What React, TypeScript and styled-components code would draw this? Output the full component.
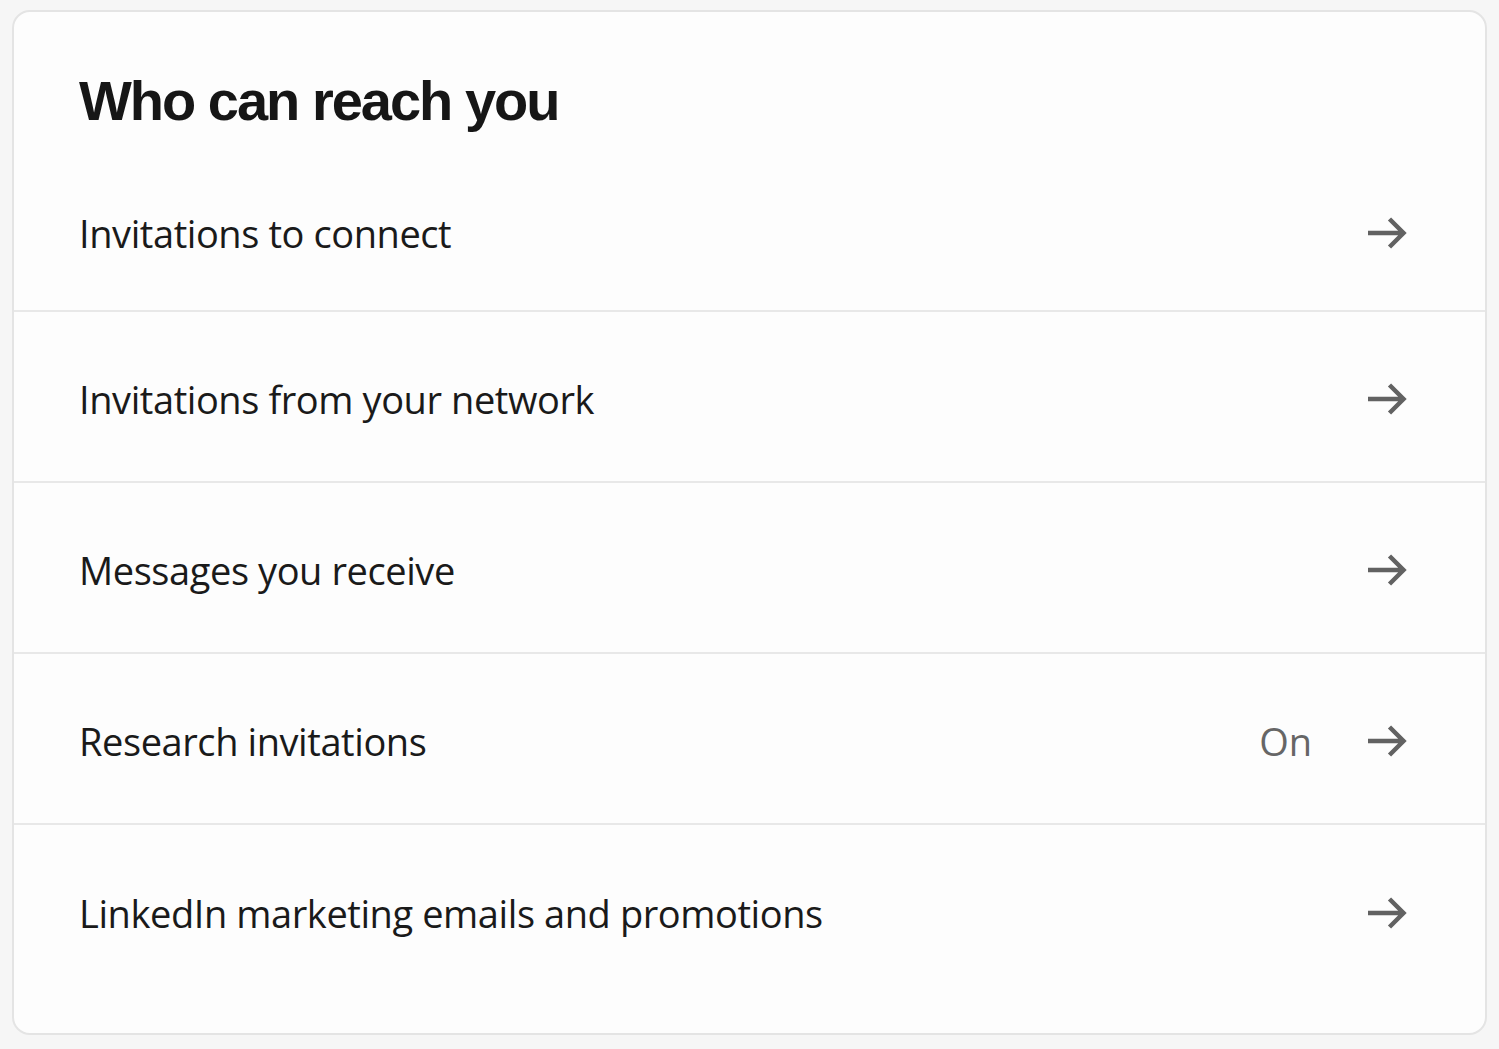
import React from "react";
import styled, { createGlobalStyle } from "styled-components";

const GlobalStyle = createGlobalStyle`
  html, body {
    margin: 0;
    padding: 0;
    background: #f6f6f6;
  }
  body {
    font-family: "Open Sans", "Noto Sans", sans-serif;
  }
`;

const Page = styled.div`
  width: 1499px;
  height: 1049px;
  padding: 10px 12px 0 12px;
  box-sizing: border-box;
`;

const Card = styled.div`
  width: 1475px;
  height: 1025px;
  box-sizing: border-box;
  background: #fdfdfd;
  border: 2px solid #e4e4e4;
  border-radius: 18px;
  display: flex;
  flex-direction: column;
`;

const Header = styled.div`
  height: 140px;
  padding: 57px 0 0 65px;
  box-sizing: border-box;
`;

const Title = styled.h1`
  margin: 0;
  font-family: "Liberation Sans", Arial, sans-serif;
  font-weight: 700;
  font-size: 56px;
  line-height: 64px;
  letter-spacing: -2px;
  color: #161616;
`;

const Row = styled.div<{ $first?: boolean; $last?: boolean }>`
  height: ${(p) => (p.$first ? "160px" : "171px")};
  box-sizing: border-box;
  display: flex;
  align-items: center;
  padding: 0 78px 0 65px;
  border-bottom: ${(p) => (p.$last ? "none" : "2px solid #e8e8e8")};
  cursor: pointer;
`;

const Label = styled.span`
  flex: 1;
  font-size: 38px;
  color: #1a1a1a;
  letter-spacing: -0.42px;
  padding-top: 4px;
`;

const Status = styled.span`
  font-size: 38px;
  color: #666666;
  margin-right: 54px;
  padding-top: 4px;
`;

const ArrowWrap = styled.span`
  display: flex;
  padding-top: 4px;
`;

const ArrowIcon = () => (
  <ArrowWrap>
    <svg width="41" height="36" viewBox="0 0 41 36" fill="none">
      <path
        d="M2 18H37M23.5 4L37.5 18L23.5 32"
        stroke="#626262"
        strokeWidth="4.5"
        strokeLinecap="butt"
        strokeLinejoin="miter"
      />
    </svg>
  </ArrowWrap>
);

const items = [
  { label: "Invitations to connect" },
  { label: "Invitations from your network" },
  { label: "Messages you receive" },
  { label: "Research invitations", status: "On" },
  { label: "LinkedIn marketing emails and promotions" },
];

export default function App() {
  return (
    <>
      <GlobalStyle />
      <Page>
        <Card>
          <Header>
            <Title>Who can reach you</Title>
          </Header>
          {items.map((item, i) => (
            <Row key={item.label} $first={i === 0} $last={i === items.length - 1}>
              <Label>{item.label}</Label>
              {item.status && <Status>{item.status}</Status>}
              <ArrowIcon />
            </Row>
          ))}
        </Card>
      </Page>
    </>
  );
}
